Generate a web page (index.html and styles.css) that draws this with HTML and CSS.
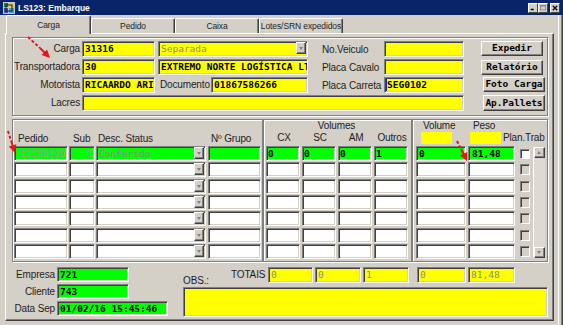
FILE: index.html
```html
<!DOCTYPE html>
<html>
<head>
<meta charset="utf-8">
<link rel="stylesheet" href="styles.css">
</head>
<body>
<div class="window">
  <div class="titlebar">
    <svg class="appicon" viewBox="0 0 12 12">
      <rect x="0" y="0" width="12" height="12" fill="#c8c8c8"/>
      <rect x="1" y="1" width="4" height="4" fill="#2a7a2a"/>
      <rect x="6" y="1" width="5" height="4" fill="#e8d020"/>
      <rect x="1" y="6" width="4" height="5" fill="#3050c0"/>
      <rect x="6" y="6" width="5" height="5" fill="#30a0d0"/>
      <rect x="3" y="3" width="6" height="6" fill="none" stroke="#202020" stroke-width="1"/>
    </svg>
    <span class="title">LS123: Embarque</span>
    <div class="ctrls">
      <span class="cb"><svg viewBox="0 0 8 8"><rect x="1" y="5" width="4" height="2" fill="#000"/></svg></span>
      <span class="cb"><svg viewBox="0 0 8 8"><rect x="0.5" y="0.5" width="7" height="6" fill="none" stroke="#808080"/><rect x="0.5" y="0.5" width="7" height="1.5" fill="#808080"/></svg></span>
      <span class="cb cls"><svg viewBox="0 0 8 8"><path d="M1 1 L7 7 M7 1 L1 7" stroke="#000" stroke-width="1.6"/></svg></span>
    </div>
  </div>

  <div class="tabs">
    <div class="tab active">Carga</div>
    <div class="tab">Pedido</div>
    <div class="tab">Caixa</div>
    <div class="tab">Lotes/SRN expedidos</div>
  </div>

  <div class="panel">
    <div class="group head">
      <div class="lbl c1">Carga</div>
      <div class="fld y mono c2">31316</div>
      <div class="fld y combo c4"><span class="grey">Separada</span><span class="dd"></span></div>
      <div class="lbl2 c5">No.Veiculo</div>
      <div class="fld y c6"></div>
      <div class="btn c8">Expedir</div>

      <div class="lbl c1">Transportadora</div>
      <div class="fld y mono c2">30</div>
      <div class="fld y mono c4">EXTREMO NORTE LOGÍSTICA LTDA</div>
      <div class="lbl2 c5">Placa Cavalo</div>
      <div class="fld y c6"></div>
      <div class="btn b2 c8">Relatório</div>

      <div class="lbl c1">Motorista</div>
      <div class="fld y mono c2">RICAARDO ARI</div>
      <div class="doc c4"><span class="doclbl">Documento</span><div class="fld y mono docfld">01867586266</div></div>
      <div class="lbl2 c5">Placa Carreta</div>
      <div class="fld y mono c6 caret">SEG0102</div>
      <div class="btn b3 c8">Foto Carga</div>

      <div class="lbl c1">Lacres</div>
      <div class="fld y span"></div>
      <div class="btn b4 c8">Ap.Pallets</div>
    </div>

    <div class="lists">
      <div class="group box1">
        <div class="hdr1">
          <span class="h-ped">Pedido</span>
          <span class="h-sub">Sub</span>
          <span class="h-desc">Desc. Status</span>
          <span class="h-grp">Nº Grupo</span>
        </div>
        <div class="rows">
          <div class="row r1"><div class="fld g c-ped mono lite rt">13250129</div><div class="fld g c-sub mono lite rt">1</div><div class="fld g c-desc combo"><span class="grey">Conferido</span><span class="dd"></span></div><div class="fld g c-grp"></div></div>
          <div class="row r1"><div class="fld w c-ped"></div><div class="fld w c-sub"></div><div class="fld w c-desc combo"><span></span><span class="dd"></span></div><div class="fld w c-grp"></div></div>
          <div class="row r1"><div class="fld w c-ped"></div><div class="fld w c-sub"></div><div class="fld w c-desc combo"><span></span><span class="dd"></span></div><div class="fld w c-grp"></div></div>
          <div class="row r1"><div class="fld w c-ped"></div><div class="fld w c-sub"></div><div class="fld w c-desc combo"><span></span><span class="dd"></span></div><div class="fld w c-grp"></div></div>
          <div class="row r1"><div class="fld w c-ped"></div><div class="fld w c-sub"></div><div class="fld w c-desc combo"><span></span><span class="dd"></span></div><div class="fld w c-grp"></div></div>
          <div class="row r1"><div class="fld w c-ped"></div><div class="fld w c-sub"></div><div class="fld w c-desc combo"><span></span><span class="dd"></span></div><div class="fld w c-grp"></div></div>
          <div class="row r1"><div class="fld w c-ped"></div><div class="fld w c-sub"></div><div class="fld w c-desc combo"><span></span><span class="dd"></span></div><div class="fld w c-grp"></div></div>
        </div>
      </div>

      <div class="group box2">
        <div class="hdr2">
          <div class="vol-title">Volumes</div>
          <div class="vol-cols"><span>CX</span><span>SC</span><span>AM</span><span>Outros</span></div>
        </div>
        <div class="rows">
          <div class="row r2"><div class="fld g mono">0</div><div class="fld g mono">0</div><div class="fld g mono">0</div><div class="fld g mono">1</div></div>
          <div class="row r2"><div class="fld w"></div><div class="fld w"></div><div class="fld w"></div><div class="fld w"></div></div>
          <div class="row r2"><div class="fld w"></div><div class="fld w"></div><div class="fld w"></div><div class="fld w"></div></div>
          <div class="row r2"><div class="fld w"></div><div class="fld w"></div><div class="fld w"></div><div class="fld w"></div></div>
          <div class="row r2"><div class="fld w"></div><div class="fld w"></div><div class="fld w"></div><div class="fld w"></div></div>
          <div class="row r2"><div class="fld w"></div><div class="fld w"></div><div class="fld w"></div><div class="fld w"></div></div>
          <div class="row r2"><div class="fld w"></div><div class="fld w"></div><div class="fld w"></div><div class="fld w"></div></div>
        </div>
      </div>

      <div class="group box3">
        <div class="hdr3">
          <div class="h-vol"><span>Volume</span><i class="ybox"></i></div>
          <div class="h-peso"><span>Peso</span><i class="ybox"></i></div>
          <div class="h-plan">Plan.Trab</div>
        </div>
        <div class="body3">
          <div class="rows">
            <div class="row r3"><div class="fld g mono c-vol">0</div><div class="fld g mono c-peso">81,48</div><span class="chk on"></span></div>
            <div class="row r3"><div class="fld w c-vol"></div><div class="fld w c-peso"></div><span class="chk"></span></div>
            <div class="row r3"><div class="fld w c-vol"></div><div class="fld w c-peso"></div><span class="chk"></span></div>
            <div class="row r3"><div class="fld w c-vol"></div><div class="fld w c-peso"></div><span class="chk"></span></div>
            <div class="row r3"><div class="fld w c-vol"></div><div class="fld w c-peso"></div><span class="chk"></span></div>
            <div class="row r3"><div class="fld w c-vol"></div><div class="fld w c-peso"></div><span class="chk"></span></div>
            <div class="row r3"><div class="fld w c-vol"></div><div class="fld w c-peso"></div><span class="chk"></span></div>
          </div>
          <div class="scroll">
            <span class="sbtn"><i class="up"></i></span>
            <span class="track"></span>
            <span class="sbtn"><i class="down"></i></span>
          </div>
        </div>
      </div>
    </div>

    <div class="bottom">
      <div class="info">
        <div class="lbl">Empresa</div><div class="fld g mono f72">721</div>
        <div class="lbl">Cliente</div><div class="fld g mono f72">743</div>
        <div class="lbl">Data Sep</div><div class="fld g mono f111">01/02/16 15:45:46</div>
      </div>
      <div class="right">
        <div class="totrow">
          <div class="obslbl">OBS.:</div>
          <div class="totlbl">TOTAIS</div>
          <div class="fld y mono grey t45">0</div>
          <div class="fld y mono grey t46">0</div>
          <div class="fld y mono grey t46">1</div>
          <div class="fld y mono grey t49">0</div>
          <div class="fld y mono grey t47">81,48</div>
        </div>
        <div class="fld y obs"></div>
      </div>
    </div>
  </div>

  <svg class="arrows" viewBox="0 0 563 325">
    <g stroke="#e8141c" stroke-width="2" fill="none">
      <path d="M28 37 L40 48" stroke-dasharray="3 2"/>
      <path d="M40 48 L45 53"/>
      <path d="M8 131 L11.5 142" stroke-dasharray="3 2"/>
      <path d="M11.5 142 L12.8 146"/>
      <path d="M457 141 L461 149" stroke-dasharray="3 2"/>
      <path d="M461 149 L463.8 154"/>
    </g>
    <g fill="#e8141c">
      <polygon points="50,58 41.5,55.1 47.1,49.5"/>
      <polygon points="15,153 8.8,146.6 16.4,144.2"/>
      <polygon points="467,161 460,155.5 467.2,152.1"/>
    </g>
  </svg>
</div>
</body>
</html>
```

FILE: styles.css
```css
* { box-sizing: border-box; margin: 0; padding: 0; }
html, body { width: 563px; height: 325px; overflow: hidden; }
body {
  background: #d4d0c8;
  font-family: "Liberation Sans", Arial, sans-serif;
  font-size: 10px;
  letter-spacing: -0.15px;
  color: #1e1e1e;
}
.window {
  position: relative;
  width: 563px;
  height: 325px;
  background: #d4d0c8;
  box-shadow: inset -1px 0 0 #404040, inset -2px 0 0 #808080, inset -4px 0 0 #d4d0c8, inset -5px 0 0 #ffffff;
}

/* title bar */
.titlebar {
  height: 15px;
  background: #0a246a;
  display: flex;
  align-items: center;
  padding-left: 3px;
  color: #fff;
}
.appicon { width: 12px; height: 12px; flex: none; }
.title { margin-left: 3px; font-weight: bold; font-size: 8.5px; letter-spacing: 0; }
.ctrls { margin-left: auto; display: flex; padding-right: 3px; }
.cb {
  width: 10px; height: 10px;
  background: #d4d0c8;
  border: 1px solid;
  border-color: #fff #404040 #404040 #fff;
  display: flex; align-items: center; justify-content: center;
}
.cb svg { width: 6px; height: 6px; }
.cb.cls { margin-left: 2px; }

/* tabs */
.tabs {
  display: flex;
  align-items: flex-end;
  height: 18px;
  padding-left: 6px;
  position: relative;
  z-index: 1;
}
.tab {
  width: 84px;
  height: 15px;
  border: 1px solid;
  border-bottom: none;
  border-color: #fff #404040 transparent #fff;
  box-shadow: inset -1px 0 0 #808080;
  border-radius: 2px 2px 0 0;
  text-align: center;
  line-height: 14px;
  font-size: 8.5px;
  letter-spacing: -0.1px;
  white-space: nowrap;
  background: #d4d0c8;
}
.tab.active {
  width: 85px;
  height: 19px;
  margin-bottom: -1px;
  line-height: 18px;
}

/* panel */
.panel {
  margin-left: 5px;
  width: 549px;
  height: 288px;
  border: 1px solid;
  border-color: #fff #404040 #404040 #fff;
  box-shadow: inset -1px -1px 0 #808080;
  padding: 3px 0 0 6px;
}
.group {
  border: 1px solid #808080;
  box-shadow: inset 1px 1px 0 #fff, 1px 1px 0 #fff;
}

/* fields */
.fld {
  border: 1px solid;
  border-color: #808080 #fff #fff #808080;
  box-shadow: inset 1px 1px 0 #404040, inset -1px -1px 0 #d4d0c8;
  overflow: hidden;
  white-space: nowrap;
  padding: 0 2px;
  line-height: 13px;
}
.y { background: #ffff00; }
.g { background: #00ff00; }
.w { background: #ffffff; }
.mono, .grey, .btn {
  font-family: "DejaVu Sans Mono", "Liberation Mono", monospace;
  font-size: 9.5px;
  letter-spacing: 0;
}
.mono { font-weight: bold; color: #000; }
.grey { color: #8c8c8c; font-weight: normal; }
.lite { color: #9a9a9a; font-weight: normal; }
.rt { text-align: right; }
.combo { display: flex; justify-content: space-between; padding-right: 1px; }
.combo > span:first-child { font-family: "DejaVu Sans Mono", monospace; font-size: 9.5px; }
.dd {
  width: 10px;
  height: 12px;
  flex: none;
  background: #d4d0c8;
  border: 1px solid;
  border-color: #fff #404040 #404040 #fff;
  box-shadow: inset -1px -1px 0 #808080;
  position: relative;
}
.dd::after {
  content: "";
  position: absolute;
  left: 2px; top: 4px;
  border-left: 2.5px solid transparent;
  border-right: 2.5px solid transparent;
  border-top: 3px solid #808080;
}

/* header form */
.head {
  width: 536px;
  height: 79px;
  display: grid;
  grid-template-columns: 69px 73px 3px 150px 76px 80px 17px 63px;
  grid-auto-rows: 16px;
  row-gap: 2px;
  padding-top: 3px;
}
.c1 { grid-column: 1; }
.c2 { grid-column: 2; }
.c4 { grid-column: 4; }
.c5 { grid-column: 5; }
.c6 { grid-column: 6; }
.c8 { grid-column: 8; }
.span { grid-column: 2 / 7; }
.lbl { text-align: right; padding-right: 2px; line-height: 16px; }
.lbl2 { padding-left: 14px; line-height: 17px; }
.doc { display: flex; }
.doclbl { width: 53px; padding-left: 2px; line-height: 16px; }
.docfld { flex: 1; }
.caret { box-shadow: inset 1px 1px 0 #404040, inset -1px -1px 0 #d4d0c8, inset 2px 0 0 #1a2a9a; }
.btn {
  width: 62px;
  height: 15px;
  background: #d4d0c8;
  border: 1px solid;
  border-color: #fff #404040 #404040 #fff;
  box-shadow: inset -1px -1px 0 #808080;
  text-align: center;
  font-weight: bold;
  line-height: 12px;
  color: #000;
}
.b2 { margin-top: 1px; }
.b3 { margin-left: 2px; }
.b4 { margin-left: 2px; height: 16px; line-height: 13px; }

/* lists */
.lists { display: flex; margin-top: 3px; height: 143px; }
.box1 { width: 251px; padding-left: 1px; }
.box2 { width: 149px; padding-left: 2px; }
.box3 { width: 136px; padding-left: 2px; }
.rows { display: flex; flex-direction: column; row-gap: 1.33px; }
.row { display: flex; height: 15px; }
.row .fld { line-height: 13px; }

.hdr1 { height: 26px; display: flex; align-items: flex-end; padding-bottom: 1px; line-height: 12px; }
.h-ped { width: 55px; padding-left: 4px; }
.h-sub { width: 27px; padding-left: 4px; }
.h-desc { width: 112px; padding-left: 2px; }
.h-grp { padding-left: 3px; }
.c-ped { width: 54px; margin-right: 1px; }
.c-sub { width: 26px; margin-right: 1px; }
.c-desc { width: 110px; margin-right: 2px; }
.c-grp { width: 53px; }

.hdr2 { height: 26px; display: flex; flex-direction: column; line-height: 12px; }
.vol-title { text-align: center; padding-right: 4px; }
.vol-cols { display: flex; }
.vol-cols span { width: 36px; text-align: center; }
.r2 .fld { width: 34px; margin-right: 2px; padding-left: 1px; }

.hdr3 { height: 26px; display: flex; padding-left: 1px; line-height: 12px; }
.h-vol { width: 52px; display: flex; flex-direction: column; }
.h-vol span { padding-left: 7px; }
.h-peso { width: 35px; display: flex; flex-direction: column; }
.h-peso span { padding-left: 5px; }
.ybox { display: block; width: 31px; height: 12px; background: #ffff00; }
.h-vol .ybox { margin-left: 5px; }
.h-peso .ybox { margin-left: 2px; }
.h-plan { align-self: flex-end; padding-bottom: 2px; }
.body3 { display: flex; padding-left: 1px; }
.c-vol { width: 50px; margin-right: 2px; }
.c-peso { width: 47px; margin-right: 5px; padding-left: 3px; }
.chk {
  width: 10px; height: 11px;
  margin-top: 2px;
  margin-right: 3px;
  border: 1px solid;
  border-color: #808080 #fff #fff #808080;
  box-shadow: inset 1px 1px 0 #404040;
  background: #d4d0c8;
}
.chk.on { background: #fff; margin-top: 3px; height: 10px; }
.scroll {
  width: 12px;
  height: 111px;
  margin-top: 1px;
  display: flex;
  flex-direction: column;
  background: #d4d0c8;
  border-left: 1px solid #fff;
  box-shadow: inset -1px 0 0 #808080;
}
.sbtn {
  height: 11px;
  background: #d4d0c8;
  border: 1px solid;
  border-color: #fff #404040 #404040 #fff;
  box-shadow: inset -1px -1px 0 #808080;
  position: relative;
}
.track { flex: 1; background: #dedad3; }
.sbtn i { position: absolute; left: 2px; width: 0; height: 0; border-left: 2.5px solid transparent; border-right: 2.5px solid transparent; }
.sbtn .up { top: 3px; border-bottom: 3px solid #808080; }
.sbtn .down { top: 3px; border-top: 3px solid #808080; }

/* bottom */
.bottom { display: flex; padding-top: 5px; padding-left: 1px; }
.info {
  width: 170px;
  display: grid;
  grid-template-columns: 42px auto;
  column-gap: 2px;
  row-gap: 2px;
  grid-auto-rows: 15px;
  align-items: start;
}
.info .lbl { padding-right: 0; line-height: 15px; }
.info .fld { height: 15px; }
.f72 { width: 72px; }
.f111 { width: 111px; }
.right { width: 365px; }
.totrow { display: flex; height: 20px; align-items: flex-start; }
.totrow .fld { height: 16px; line-height: 14px; margin-right: 2px; }
.obslbl { width: 48px; align-self: flex-end; line-height: 12px; }
.totlbl { width: 37px; line-height: 15px; }
.t45 { width: 45px; }
.t46 { width: 46px; }
.t46 + .t49 { margin-left: 6px; }
.t49 { width: 49px; }
.t47 { width: 47px; }
.obs { width: 365px; height: 30px; }

/* annotation arrows */
.arrows {
  position: absolute;
  left: 0; top: 0;
  width: 563px; height: 325px;
  pointer-events: none;
}
```
